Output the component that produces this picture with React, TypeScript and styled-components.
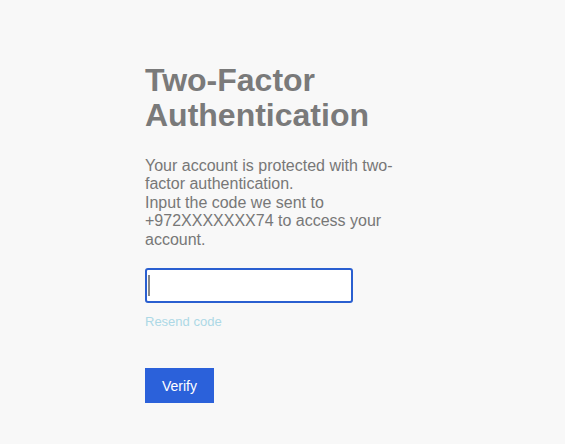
import styled, { createGlobalStyle } from "styled-components";

const GlobalStyle = createGlobalStyle`
  html, body {
    margin: 0;
    background: #f8f8f8;
    font-family: "Liberation Sans", Arial, sans-serif;
  }
`;

const Page = styled.div`
  min-height: 444px;
  display: flex;
  justify-content: flex-start;
  padding: 63px 0 0 145px;
  box-sizing: border-box;
`;

const Column = styled.div`
  width: 252px;
  display: flex;
  flex-direction: column;
`;

const Title = styled.h1`
  margin: 0 0 24px;
  font-size: 32px;
  line-height: 35px;
  font-weight: 700;
  color: #7a7a7a;
`;

const Text = styled.p`
  margin: 0 0 19px;
  font-size: 16px;
  line-height: 18.4px;
  color: #777;
`;

const InputWrap = styled.div`
  position: relative;
  width: 208px;
  height: 35px;
`;

const CodeInput = styled.input`
  width: 100%;
  height: 100%;
  box-sizing: border-box;
  border: 2px solid #2a5fd0;
  border-radius: 3px;
  background: #fff;
  outline: none;
  padding: 0 4px;
  font-size: 16px;
  caret-color: #777;
`;

// caret drawn over the empty field, as in the focused screenshot
const Caret = styled.span`
  position: absolute;
  left: 3px;
  top: 7px;
  width: 2px;
  height: 21px;
  background: #888;
  pointer-events: none;
`;

const ResendLink = styled.a`
  margin-top: 11px;
  font-size: 13px;
  line-height: 15px;
  color: #add8e6;
  text-decoration: none;
  cursor: pointer;
`;

const VerifyButton = styled.button`
  margin-top: 39px;
  align-self: flex-start;
  width: 69px;
  height: 35px;
  border: none;
  background: #2b61da;
  color: #fff;
  font-family: "Liberation Sans", Arial, sans-serif;
  font-size: 14px;
  cursor: pointer;
`;

export default function App() {
  return (
    <>
      <GlobalStyle />
      <Page>
        <Column>
          <Title>Two-Factor Authentication</Title>
          <Text>
            Your account is protected with two-factor authentication.
            <br />
            Input the code we sent to +972XXXXXXX74 to access your account.
          </Text>
          <InputWrap>
            <CodeInput />
            <Caret />
          </InputWrap>
          <ResendLink>Resend code</ResendLink>
          <VerifyButton>Verify</VerifyButton>
        </Column>
      </Page>
    </>
  );
}
